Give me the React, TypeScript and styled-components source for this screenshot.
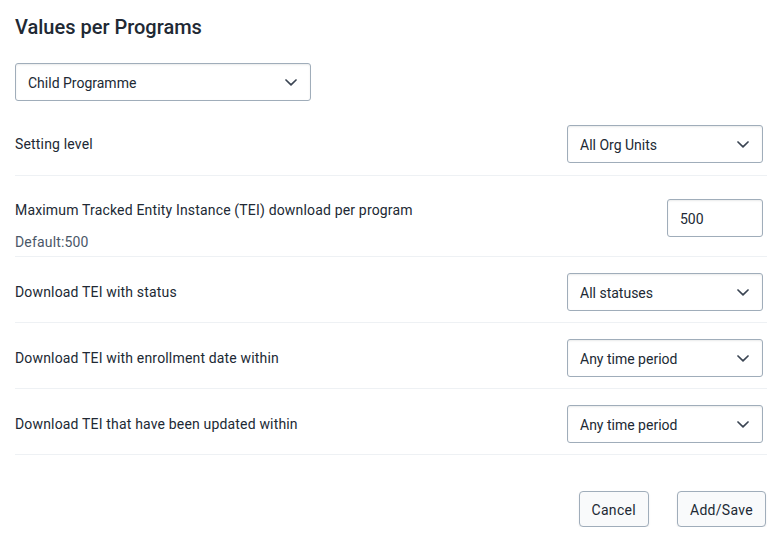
import React from "react";
import styled, { createGlobalStyle } from "styled-components";

const Global = createGlobalStyle`
  html, body { margin: 0; padding: 0; background: #ffffff; }
  body { font-family: Roboto, "Noto Sans", "Liberation Sans", sans-serif; color: #212934; -webkit-font-smoothing: antialiased; }
  * { box-sizing: border-box; }
`;

const Page = styled.div`
  padding: 15px 16px 0 15px;
  width: 783px;
`;

const Title = styled.h2`
  margin: 0;
  font-size: 20px;
  font-weight: 500;
  line-height: 24px;
  color: #212934;
`;

const SelectBox = styled.div<{ $width: number }>`
  width: ${(p) => p.$width}px;
  height: 38px;
  display: flex;
  align-items: center;
  justify-content: space-between;
  padding: 1px 13px 0 12px;
  background: #ffffff;
  border: 1px solid #a0adba;
  border-radius: 3px;
  box-shadow: inset 0 1px 2px 0 rgba(48, 54, 60, 0.1);
  font-size: 14px;
  line-height: 16px;
  color: #212934;
  flex-shrink: 0;
`;

const TopSelect = styled.div`
  margin-top: 24px;
  margin-bottom: 8px;
`;

const Row = styled.div<{ $bottom?: number }>`
  display: flex;
  align-items: flex-start;
  justify-content: space-between;
  padding: 16px 4px ${(p) => p.$bottom ?? 11}px 0;
  border-bottom: 1px solid #eef1f4;
`;

const LabelCol = styled.div`
  display: flex;
  flex-direction: column;
`;

const Label = styled.div<{ $top: number }>`
  font-size: 14px;
  line-height: 20px;
  letter-spacing: 0.17px;
  margin-top: ${(p) => p.$top}px;
  color: #212934;
`;

const Help = styled.div`
  font-size: 14px;
  line-height: 18px;
  letter-spacing: 0.17px;
  margin-top: 13px;
  color: #4a5768;
`;

const NumberInput = styled.div`
  width: 96px;
  height: 38px;
  margin-top: 7px;
  display: flex;
  align-items: center;
  padding: 1px 12px 0;
  border: 1px solid #a0adba;
  border-radius: 3px;
  box-shadow: inset 0 1px 2px 0 rgba(48, 54, 60, 0.1);
  font-size: 14px;
  color: #212934;
`;

const Footer = styled.div`
  display: flex;
  justify-content: flex-end;
  gap: 28px;
  margin-top: 36px;
  padding-right: 1px;
`;

const Button = styled.button`
  height: 36px;
  padding: 1px 12px 0;
  font-family: Roboto, "Noto Sans", "Liberation Sans", sans-serif;
  font-size: 14px;
  line-height: 16px;
  color: #212934;
  background: #f9fafb;
  border: 1px solid #a0adba;
  border-radius: 4px;
  box-shadow: 0 1px 2px 0 rgba(33, 41, 52, 0.08);
  letter-spacing: 0.3px;
`;

const Chevron = () => (
  <svg width="12" height="7" viewBox="0 0 12 7" fill="none">
    <path d="M1 1 L6 5.8 L11 1" stroke="#3b4553" strokeWidth="1.7" strokeLinecap="round" strokeLinejoin="round" />
  </svg>
);

const Select = ({ value, width }: { value: string; width: number }) => (
  <SelectBox $width={width}>
    <span>{value}</span>
    <Chevron />
  </SelectBox>
);

const rows = [
  { label: "Download TEI with status", value: "All statuses" },
  { label: "Download TEI with enrollment date within", value: "Any time period" },
  { label: "Download TEI that have been updated within", value: "Any time period" },
];

export default function App() {
  return (
    <>
      <Global />
      <Page>
        <Title>Values per Programs</Title>
        <TopSelect>
          <Select value="Child Programme" width={296} />
        </TopSelect>
        <Row $bottom={12}>
          <Label $top={9}>Setting level</Label>
          <Select value="All Org Units" width={196} />
        </Row>
        <Row $bottom={5}>
          <LabelCol>
            <Label $top={8}>Maximum Tracked Entity Instance (TEI) download per program</Label>
            <Help>Default:500</Help>
          </LabelCol>
          <NumberInput>500</NumberInput>
        </Row>
        {rows.map((r, i) => (
          <Row key={i}>
            <Label $top={9}>{r.label}</Label>
            <Select value={r.value} width={196} />
          </Row>
        ))}
        <Footer>
          <Button>Cancel</Button>
          <Button>Add/Save</Button>
        </Footer>
      </Page>
    </>
  );
}
